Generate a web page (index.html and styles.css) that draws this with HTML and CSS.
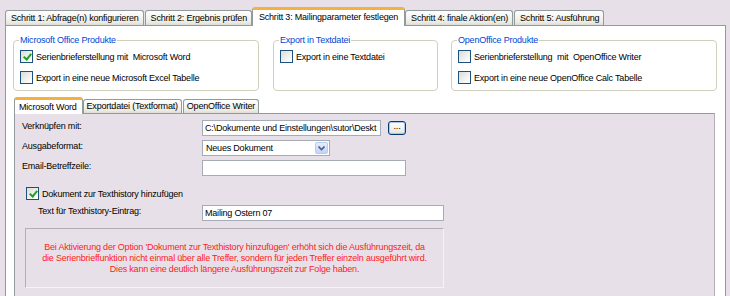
FILE: index.html
```html
<!DOCTYPE html>
<html lang="de">
  <head>
    <meta charset="utf-8" />
    <title>Mailingparameter festlegen</title>
    <link rel="stylesheet" href="styles.css">
  </head>
  <body>
    <div class="app">
      <div class="tabs">
        <div class="tab">Schritt 1: Abfrage(n) konfigurieren</div>
        <div class="tab">Schritt 2: Ergebnis prüfen</div>
        <div class="tab active">Schritt 3: Mailingparameter festlegen</div>
        <div class="tab">Schritt 4: finale Aktion(en)</div>
        <div class="tab">Schritt 5: Ausführung</div>
      </div>

      <div class="page">
        <div class="groups">
          <fieldset class="group g-office">
            <legend>Microsoft Office Produkte</legend>
            <label class="check"><span class="box checked"></span>Serienbrieferstellung mit&nbsp; Microsoft Word</label>
            <label class="check"><span class="box"></span>Export in eine neue Microsoft Excel Tabelle</label>
          </fieldset>
          <fieldset class="group g-text">
            <legend>Export in Textdatei</legend>
            <label class="check"><span class="box"></span>Export in eine Textdatei</label>
          </fieldset>
          <fieldset class="group g-oo">
            <legend>OpenOffice Produkte</legend>
            <label class="check"><span class="box"></span>Serienbrieferstellung&nbsp; mit&nbsp; OpenOffice Writer</label>
            <label class="check"><span class="box"></span>Export in eine neue OpenOffice Calc Tabelle</label>
          </fieldset>
        </div>

        <div class="subtabs tabs">
          <div class="tab active">Microsoft Word</div>
          <div class="tab">Exportdatei (Textformat)</div>
          <div class="tab">OpenOffice Writer</div>
        </div>

        <div class="subpage">
          <div class="form">
            <div class="label">Verknüpfen mit:</div>
            <div class="field">
              <div class="input path">C:\Dokumente und Einstellungen\sutor\Deskt</div>
              <div class="btn">...</div>
            </div>
            <div class="label">Ausgabeformat:</div>
            <div class="field">
              <div class="select">
                <span>Neues Dokument</span>
                <span class="arrow">
                  <svg width="7" height="5" viewBox="0 0 7 5"><path d="M0.5 0.5 L3.5 3.5 L6.5 0.5" fill="none" stroke="#4d6185" stroke-width="1.6"/></svg>
                </span>
              </div>
            </div>
            <div class="label">Email-Betreffzeile:</div>
            <div class="field">
              <div class="input subject"></div>
            </div>
          </div>

          <label class="check history"><span class="box checked"></span>Dokument zur Texthistory hinzufügen</label>

          <div class="form">
            <div class="label indent">Text für Texthistory-Eintrag:</div>
            <div class="field">
              <div class="input entry">Mailing Ostern 07</div>
            </div>
          </div>

          <div class="notice">
            <div>Bei Aktivierung der Option 'Dokument zur Texthistory hinzufügen' erhöht sich die Ausführungszeit, da</div>
            <div>die Serienbrieffunktion nicht einmal über alle Treffer, sondern für jeden Treffer einzeln ausgeführt wird.</div>
            <div>Dies kann eine deutlich längere Ausführungszeit zur Folge haben.</div>
          </div>
        </div>
      </div>
    </div>
  </body>
</html>
```

FILE: styles.css
```css
html,
body {
  width: 100%;
  height: 100%;
}

body {
  margin: 0;
  overflow: hidden;
  background-color: #e8e0e8;
  font-family: "Liberation Sans", Arial, sans-serif;
  font-size: 9px;
  letter-spacing: -0.2px;
  color: #000;
}

* {
  box-sizing: border-box;
}

.app {
  height: 100%;
  display: flex;
  flex-direction: column;
  padding: 7px 4px 0 5px;
}

/* tab strips */

.tabs {
  display: flex;
  align-items: flex-end;
  position: relative;
  z-index: 1;
}

.tab {
  height: 15px;
  line-height: 14px;
  padding: 0 4px 0 5px;
  margin-right: 1px;
  border: 1px solid #919b9c;
  border-bottom: none;
  border-radius: 3px 3px 0 0;
  background: linear-gradient(#fefefe, #ecece6 80%, #dcdcd4);
  white-space: nowrap;
}

.tab.active {
  height: 19px;
  line-height: 15px;
  margin: 0 0 -1px -1px;
  padding: 0 6px;
  border-top: 3px solid #f6b13c;
  background: #fff;
}

.page {
  flex: 1;
  display: flex;
  flex-direction: column;
  border: 1px solid #919b9c;
  border-bottom: none;
  background-color: #fff;
}

/* group boxes */

.groups {
  display: flex;
  gap: 14px;
  padding: 9px 0 0 7px;
}

.group {
  margin: 0;
  height: 56px;
  padding: 4px 6px 0 6px;
  border: 1px solid #d0d0bf;
  border-radius: 4px;
}

.group legend {
  padding: 0 1px;
  margin-left: -1px;
  line-height: 11px;
  color: #0046d5;
}

.g-office {
  width: 246px;
}

.g-text {
  width: 165px;
}

.g-oo {
  width: 266px;
  margin-left: -1px;
}

.check {
  display: flex;
  align-items: center;
  height: 13px;
  margin-bottom: 8px;
}

.box {
  flex: none;
  width: 13px;
  height: 13px;
  margin-right: 3px;
  border: 1px solid #1c5180;
  background: linear-gradient(135deg, #dcdcd6, #f6f6f3 70%, #fff);
  position: relative;
}

.box.checked::after {
  content: "";
  position: absolute;
  left: 4px;
  top: 1px;
  width: 3px;
  height: 6px;
  border: solid #21a121;
  border-width: 0 2px 2px 0;
  transform: rotate(40deg);
}

/* sub tabs */

.subtabs {
  margin: 6px 0 0 8px;
}

.subtabs .tab {
  height: 14px;
  line-height: 13px;
  padding: 0 3px;
}

.subtabs .tab.active {
  height: 17px;
  line-height: 14px;
  margin-left: 0;
  padding: 0 5px 0 4px;
}

.subpage {
  flex: 1;
  margin: 0 10px 0 8px;
  border: 1px solid #919b9c;
  border-right-color: #b8b0b8;
  border-bottom: none;
  background-color: #e8e0e8;
  padding: 6px 0 0 7px;
}

/* form rows */

.form {
  display: grid;
  grid-template-columns: 180px auto;
  row-gap: 4px;
}

.label {
  line-height: 13px;
}

.label.indent {
  padding-left: 16px;
}

.field {
  display: flex;
  align-items: center;
  gap: 7px;
}

.input {
  height: 16px;
  line-height: 14px;
  padding: 0 2px;
  border: 1px solid #a5acb5;
  background-color: #fff;
  white-space: nowrap;
  overflow: hidden;
}

.path {
  width: 179px;
}

.subject {
  width: 204px;
}

.entry {
  width: 242px;
}

.btn {
  width: 18px;
  height: 14px;
  line-height: 9px;
  text-align: center;
  border: 1px solid #003c74;
  border-radius: 3px;
  background: linear-gradient(#ffffff, #ece9e0 85%, #d6d0c5);
  box-shadow: inset 0 0 0 1px #a9c6ec;
}

.select {
  display: flex;
  align-items: center;
  justify-content: space-between;
  width: 128px;
  height: 16px;
  padding: 0 1px 0 3px;
  border: 1px solid #a5acb5;
  background-color: #fff;
}

.arrow {
  display: flex;
  align-items: center;
  justify-content: center;
  width: 13px;
  height: 12px;
  border: 1px solid #b9c9ef;
  border-radius: 2px;
  background: linear-gradient(#e6eefc, #c1d3fb);
}

.history {
  margin: 11px 0 5px 4px;
}

.notice {
  display: flex;
  flex-direction: column;
  align-items: center;
  justify-content: center;
  width: 419px;
  height: 60px;
  margin: 7px 0 0 3px;
  border: 1px solid;
  border-color: #b3aeb3 #f6f3f6 #f6f3f6 #b3aeb3;
  color: #ff2020;
  line-height: 11px;
  white-space: nowrap;
}
```
